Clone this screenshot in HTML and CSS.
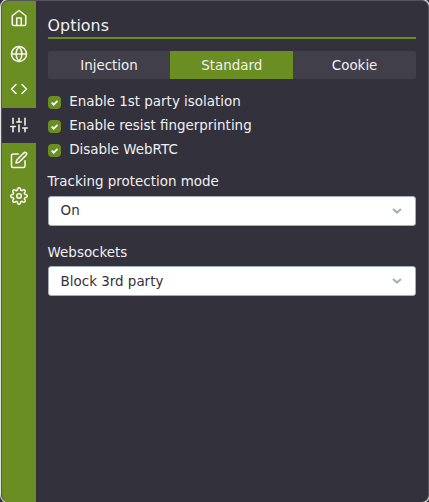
FILE: index.html
```
<!DOCTYPE html>
<html lang="en">
<head>
<meta charset="utf-8">
<title>Options</title>
<link rel="stylesheet" href="styles.css">
</head>
<body>
<div class="popup">
  <nav class="sidebar">
    <a class="nav-item"><svg class="icon" viewBox="0 0 24 24"><path d="M3 9l9-7 9 7v11a2 2 0 0 1-2 2H5a2 2 0 0 1-2-2z"/><path d="M9 22V12h6v10"/></svg></a>
    <a class="nav-item"><svg class="icon" viewBox="0 0 24 24"><circle cx="12" cy="12" r="10"/><path d="M2 12h20"/><path d="M12 2a15.3 15.3 0 0 1 4 10 15.3 15.3 0 0 1-4 10 15.3 15.3 0 0 1-4-10 15.3 15.3 0 0 1 4-10z"/></svg></a>
    <a class="nav-item"><svg class="icon" viewBox="0 0 24 24"><path d="M16 18l6-6-6-6M8 6l-6 6 6 6"/></svg></a>
    <a class="nav-item active"><svg class="icon" viewBox="0 0 24 24"><path d="M4 21v-7M4 10V3M12 21v-9M12 8V3M20 21v-5M20 12V3M1 14h6M9 8h6M17 16h6"/></svg></a>
    <a class="nav-item"><svg class="icon" viewBox="0 0 24 24"><path d="M11 4H4a2 2 0 0 0-2 2v14a2 2 0 0 0 2 2h14a2 2 0 0 0 2-2v-7"/><path d="M18.5 2.5a2.121 2.121 0 0 1 3 3L12 15l-4 1 1-4 9.500-9.500z"/></svg></a>
    <a class="nav-item"><svg class="icon" viewBox="0 0 24 24"><circle cx="12" cy="12" r="3"/><path d="M19.400 15a1.650 1.650 0 0 0 .33 1.820l.06.06a2 2 0 0 1 0 2.830 2 2 0 0 1-2.830 0l-.06-.06a1.650 1.650 0 0 0-1.820-.33 1.650 1.650 0 0 0-1 1.510V21a2 2 0 0 1-2 2 2 2 0 0 1-2-2v-.09A1.650 1.650 0 0 0 9 19.400a1.650 1.650 0 0 0-1.820.33l-.06.06a2 2 0 0 1-2.830 0 2 2 0 0 1 0-2.830l.06-.06a1.650 1.650 0 0 0 .33-1.820 1.650 1.650 0 0 0-1.510-1H3a2 2 0 0 1-2-2 2 2 0 0 1 2-2h.09A1.650 1.650 0 0 0 4.600 9a1.650 1.650 0 0 0-.33-1.820l-.06-.06a2 2 0 0 1 0-2.830 2 2 0 0 1 2.830 0l.06.06a1.650 1.650 0 0 0 1.820.33H9a1.650 1.650 0 0 0 1-1.510V3a2 2 0 0 1 2-2 2 2 0 0 1 2 2v.09a1.650 1.650 0 0 0 1 1.510 1.650 1.650 0 0 0 1.820-.33l.06-.06a2 2 0 0 1 2.830 0 2 2 0 0 1 0 2.830l-.06.06a1.650 1.650 0 0 0-.33 1.820V9a1.650 1.650 0 0 0 1.510 1H21a2 2 0 0 1 2 2 2 2 0 0 1-2 2h-.09a1.650 1.650 0 0 0-1.510 1z"/></svg></a>
  </nav>
  <main class="content">
    <h1 class="title">Options</h1>
    <div class="tabs">
      <div class="tab">Injection</div>
      <div class="tab selected">Standard</div>
      <div class="tab">Cookie</div>
    </div>
    <div class="checks">
      <div class="check"><span class="box"><svg viewBox="0 0 13 13"><path d="M3.700 6.700l2 2 3.800-3.900"/></svg></span>Enable 1st party isolation</div>
      <div class="check"><span class="box"><svg viewBox="0 0 13 13"><path d="M3.700 6.700l2 2 3.800-3.900"/></svg></span>Enable resist fingerprinting</div>
      <div class="check"><span class="box"><svg viewBox="0 0 13 13"><path d="M3.700 6.700l2 2 3.800-3.900"/></svg></span>Disable WebRTC</div>
    </div>
    <div class="field">
      <div class="label">Tracking protection mode</div>
      <div class="select">On<svg class="chevron" viewBox="0 0 10 6"><path d="M1 1l4 3.600L9 1"/></svg></div>
    </div>
    <div class="field">
      <div class="label">Websockets</div>
      <div class="select">Block 3rd party<svg class="chevron" viewBox="0 0 10 6"><path d="M1 1l4 3.600L9 1"/></svg></div>
    </div>
  </main>
</div>
</body>
</html>
```
FILE: styles.css
```
* { box-sizing: border-box; }
body {
  margin: 0;
  background: #33313c;
  font: 13.450px/24px "DejaVu Sans", sans-serif;
  color: #f0f0f2;
  overflow: hidden;
}
.popup {
  display: flex;
  width: 428px;
  height: 502px;
  margin-left: 1px;
  border: 1px solid #55545f;
  border-bottom: 0;
  border-radius: 7px;
  background: #33313c;
  box-shadow: 0 0 0 1px #e4e4e6;
  overflow: hidden;
}
.sidebar { width: 34px; background: #6b8e23; }
.nav-item {
  display: flex;
  justify-content: center;
  height: 35.600px;
  padding-top: 8px;
}
.active { background: #33313c; }
.icon {
  width: 18px;
  height: 18px;
  margin-right: 0.500px;
  fill: none;
  stroke: #f4f5ee;
  stroke-width: 2.100;
  stroke-linecap: round;
  stroke-linejoin: round;
}
.content { flex: 1; padding: 11px 12px 0 11.600px; }
.title {
  margin: 0 0 12px;
  height: 27px;
  border-bottom: 2px solid #6b8e23;
  font-size: 15.900px;
  font-weight: 400;
  line-height: 27px;
}
.tabs { display: flex; height: 28px; border-radius: 2px; overflow: hidden; }
.tab {
  flex: 1;
  background: #413f4a;
  text-align: center;
  line-height: 30px;
}
.selected { background: #6b8e23; }
.checks { margin-top: 10px; }
.check { display: flex; align-items: flex-start; height: 24px; gap: 8.600px; line-height: 26px; }
.box {
  width: 13px;
  height: 13px;
  margin-top: 7px;
  border-radius: 4px;
  background: #6b8e23;
}
.box svg { display: block; fill: none; stroke: #fff; stroke-width: 1.700; }
.field { height: 70px; padding-top: 8px; }
.field + .field { padding-top: 9px; }
.field + .field .label { height: 26px; }
.label { height: 27px; line-height: 26px; }
.select {
  display: flex;
  align-items: center;
  justify-content: space-between;
  height: 30px;
  padding: 0 13px 0 12px;
  border: 1px solid #a0aec0;
  border-radius: 3px;
  background: #fff;
  color: #33313c;
  line-height: 28px;
}
.field + .field .select { align-items: flex-start; line-height: 30px; }
.field + .field .chevron { margin-top: 11px; }
.chevron { width: 10px; height: 6px; fill: none; stroke: #a0aec0; stroke-width: 2; }
```
